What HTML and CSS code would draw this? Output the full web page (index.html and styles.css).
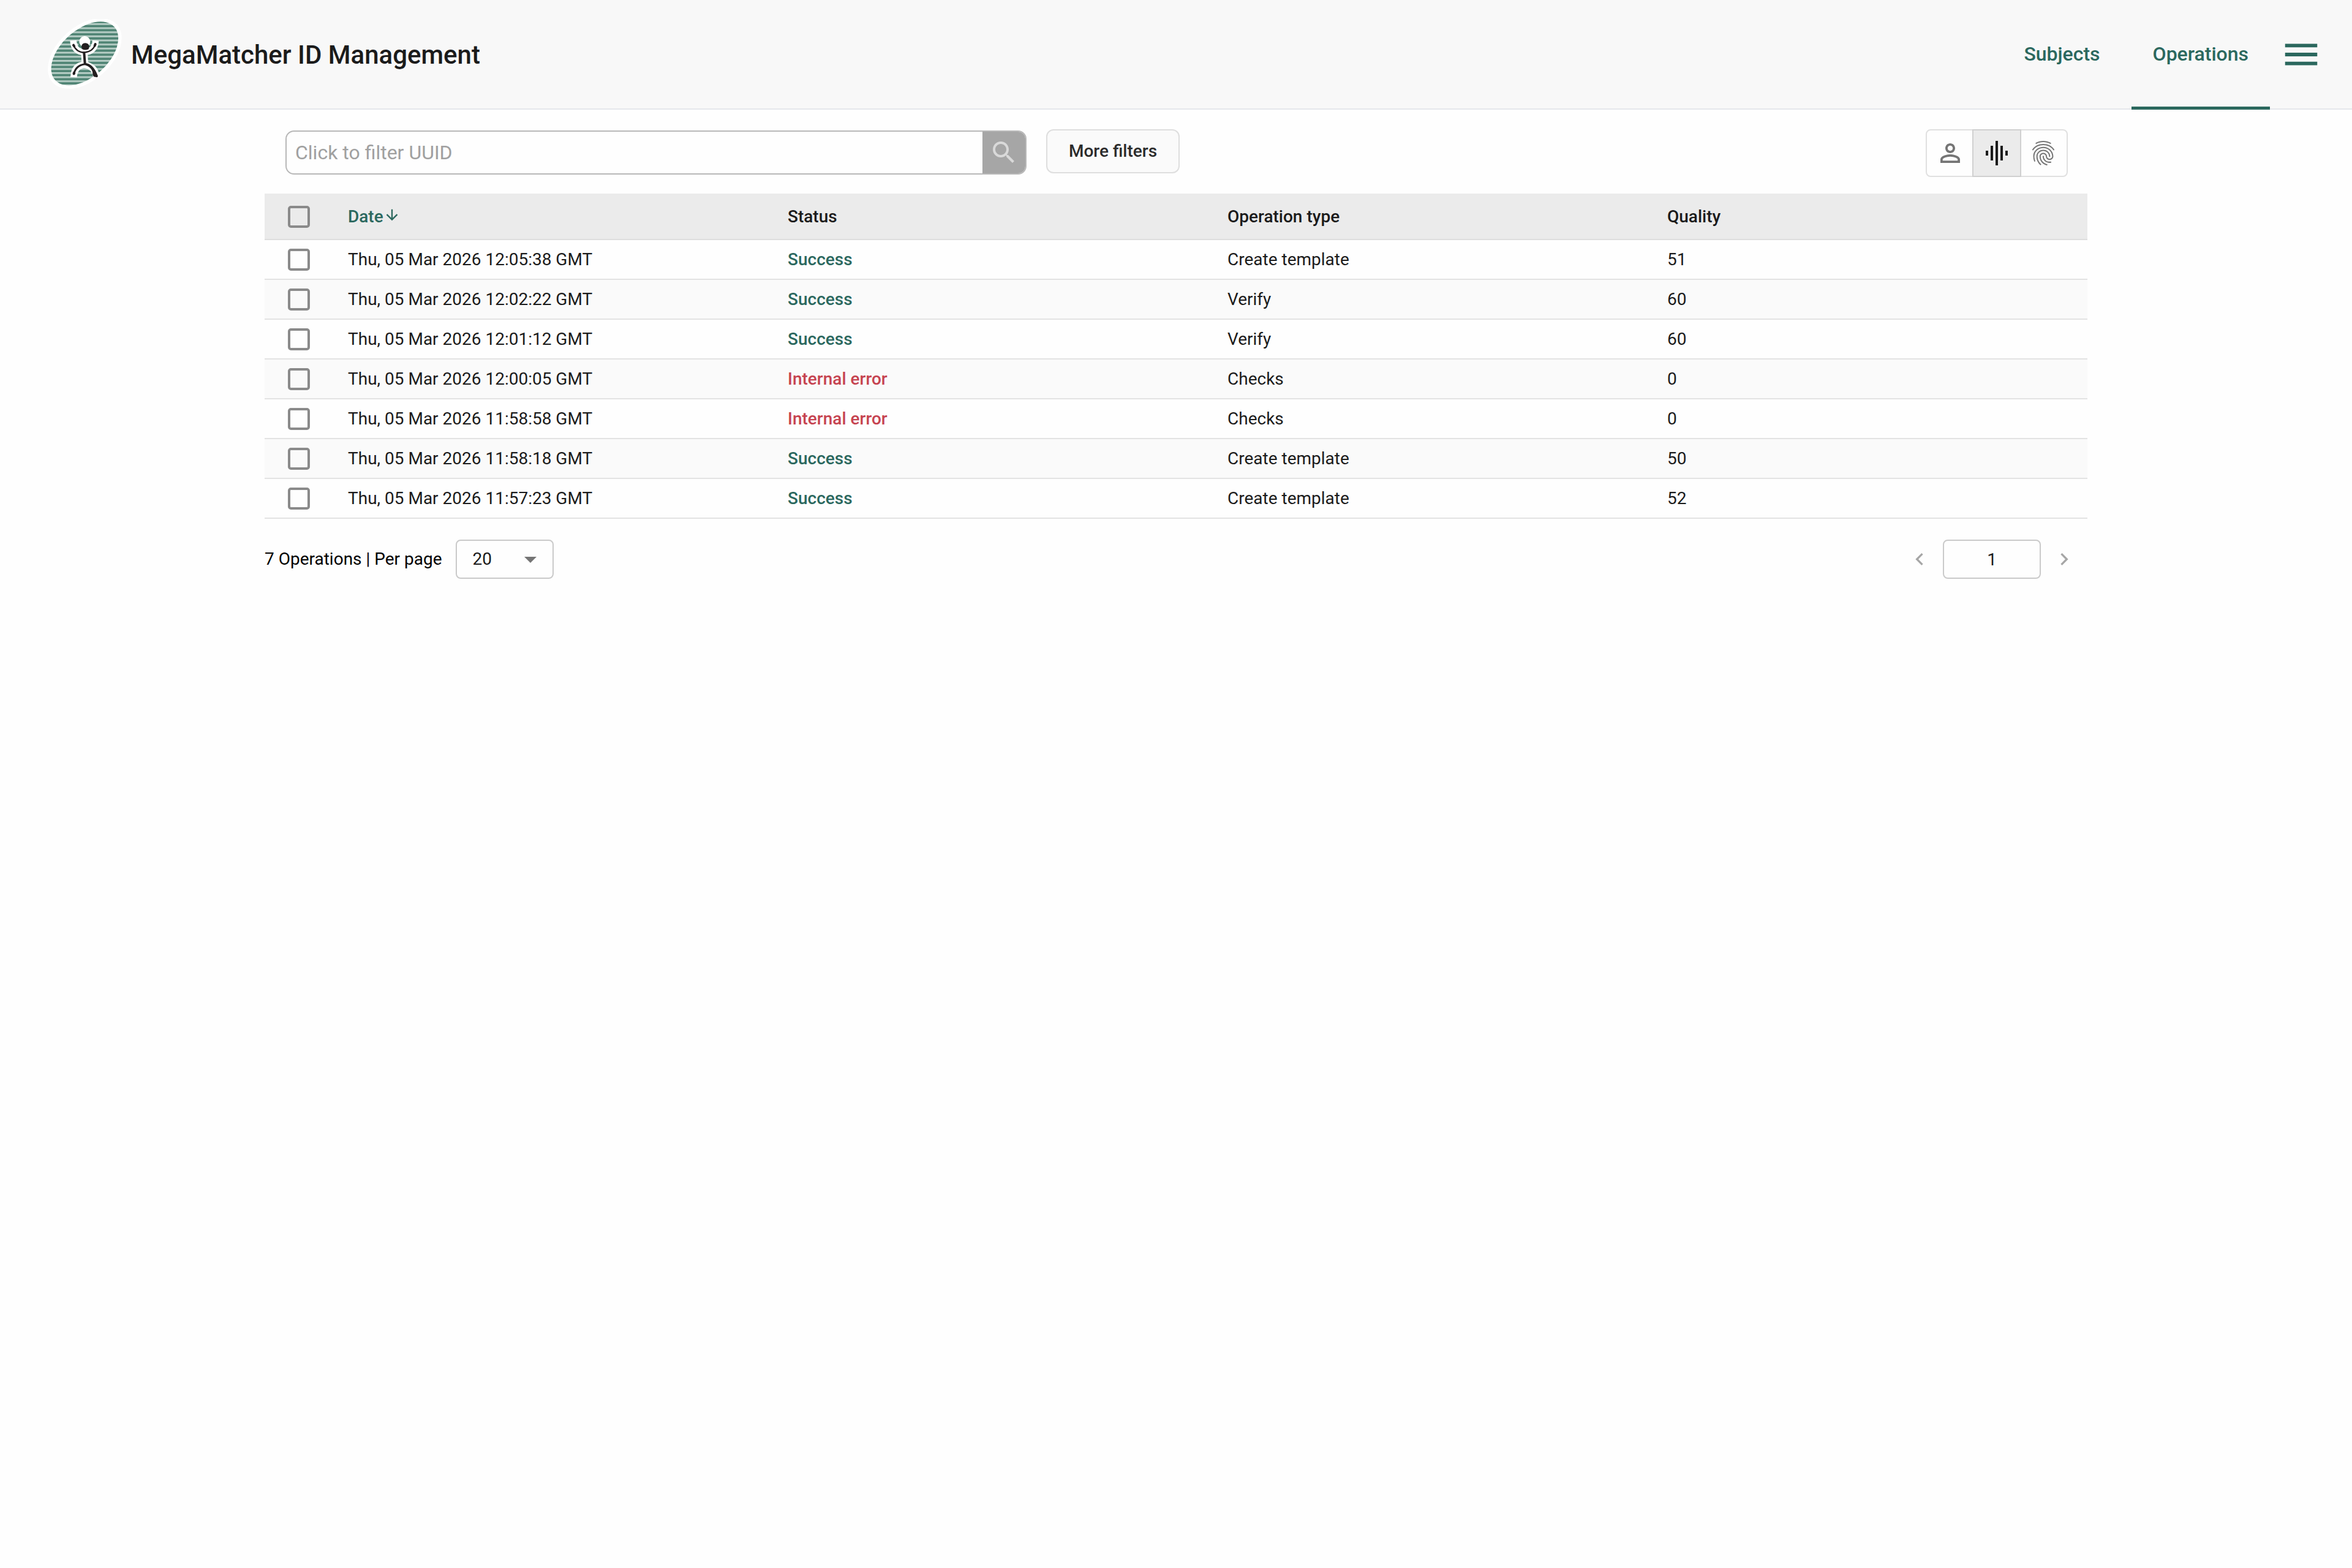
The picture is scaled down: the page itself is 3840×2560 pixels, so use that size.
FILE: index.html
```html
<!DOCTYPE html>
<html lang="en">
<head>
<meta charset="UTF-8">
<meta name="viewport" content="width=device-width, initial-scale=1.0">
<title>MegaMatcher ID Management</title>
<link rel="stylesheet" href="styles.css">
</head>
<body>
<header class="header">
    <svg class="logo" viewBox="54 60 366 345" role="img" aria-label="Logo">
        <defs>
            <pattern id="stripes" x="0" y="87" width="40" height="20" patternUnits="userSpaceOnUse">
                <rect width="40" height="20" fill="#d3e1dc"/>
                <rect width="40" height="12" y="2" fill="#4f8474"/>
                <rect width="40" height="2" y="17" fill="#8fb3a8"/>
            </pattern>
            <clipPath id="oval">
                <ellipse cx="235" cy="229" rx="195" ry="116" transform="rotate(-42 235 229)"/>
            </clipPath>
        </defs>
        <ellipse cx="235" cy="229" rx="212" ry="132" transform="rotate(-42 235 229)" fill="#fff"/>
        <rect x="54" y="60" width="366" height="345" fill="url(#stripes)" clip-path="url(#oval)"/>
        <!-- white halo round the figure -->
        <g fill="none" stroke="#fff" stroke-width="32">
            <path d="M179 166Q182 222 233 222Q284 222 288 166"/>
            <path d="M233 222L236 285"/>
            <path d="M181 345Q184 286 236 284Q284 292 292 340"/>
        </g>
        <path d="M204 168V186Q210 202 222 206V168z" fill="#4f8474"/>
        <path d="M262 166H271V180L262 186z" fill="#4f8474"/>
        <circle cx="235" cy="171" r="27" fill="#fff"/>
        <path d="M219 194Q221 178 240 178Q256 180 257 196L254 208Q237 216 222 207z" fill="#231f20"/>
        <g fill="none" stroke="#231f20" stroke-linecap="round">
            <path d="M180 189Q196 224 233 224Q276 220 287 183" stroke-width="7"/>
            <path d="M180 188L183 193M287 183L284 191" stroke-width="12"/>
            <path d="M232 226L236 278" stroke-width="12"/>
            <path d="M182 328Q192 286 236 281" stroke-width="9"/>
            <path d="M182 328L183 324" stroke-width="13"/>
        </g>
        <path d="M232 276Q276 274 300 340L296 346L280 343L274 334Q276 296 232 284z" fill="#231f20"/>
    </svg>
    <h1 class="title">MegaMatcher ID Management</h1>
    <nav class="nav">
        <a class="tab" href="#subjects">Subjects</a>
        <a class="tab active" href="#operations">Operations</a>
    </nav>
    <button class="menu-button" type="button" aria-label="Menu">
        <svg viewBox="0 0 24 24"><path d="M3 18h18v-2H3v2zm0-5h18v-2H3v2zm0-7v2h18V6H3z"/></svg>
    </button>
</header>

<main class="content">
    <div class="toolbar">
        <form class="search">
            <input class="search-input" type="text" placeholder="Click to filter UUID" aria-label="Click to filter UUID">
            <button class="search-button" type="button" aria-label="Search">
                <svg viewBox="0 0 24 24"><path d="M15.5 14h-.79l-.28-.27C15.41 12.59 16 11.11 16 9.5 16 5.91 13.09 3 9.5 3S3 5.91 3 9.5 5.91 16 9.5 16c1.61 0 3.09-.59 4.23-1.57l.27.28v.79l5 4.99L20.49 19l-4.99-5zm-6 0C7.01 14 5 11.99 5 9.5S7.01 5 9.5 5 14 7.01 14 9.5 11.99 14 9.5 14z"/></svg>
            </button>
        </form>
        <button class="filters-button" type="button">More filters</button>
        <div class="toggle-group">
            <button class="toggle" type="button" aria-label="Face">
                <svg viewBox="0 0 24 24"><path d="M12 5.9c1.16 0 2.1.94 2.1 2.1s-.94 2.1-2.1 2.1S9.900 9.160 9.900 8s.94-2.100 2.100-2.100m0 9c2.970 0 6.100 1.460 6.100 2.100v1.100H5.900V17c0-.64 3.130-2.100 6.100-2.100M12 4C9.790 4 8 5.790 8 8s1.790 4 4 4 4-1.790 4-4-1.790-4-4-4zm0 9c-2.670 0-8 1.340-8 4v3h16v-3c0-2.660-5.330-4-8-4z"/></svg>
            </button>
            <button class="toggle selected" type="button" aria-label="Voice" aria-pressed="true">
                <svg viewBox="0 0 24 24"><path d="M7 18h2V6H7v12zm4 4h2V2h-2v20zm-8-8h2v-4H3v4zm12 4h2V6h-2v12zm4-8v4h2v-4h-2z"/></svg>
            </button>
            <button class="toggle" type="button" aria-label="Finger">
                <svg viewBox="0 0 24 24"><path d="M17.810 4.470c-.08 0-.16-.02-.23-.06C15.660 3.420 14 3 12.010 3c-1.980 0-3.860.47-5.570 1.410-.24.130-.54.04-.68-.2-.13-.24-.04-.55.2-.68C7.820 2.520 9.860 2 12.010 2c2.130 0 3.990.47 6.030 1.520.25.130.34.430.21.670-.09.180-.26.280-.44.280zM3.500 9.720c-.1 0-.2-.03-.29-.09-.23-.16-.28-.47-.12-.7.990-1.400 2.250-2.500 3.750-3.270C9.980 4.040 14 4.030 17.150 5.650c1.500.77 2.760 1.860 3.750 3.250.16.220.11.540-.12.700-.23.160-.54.110-.7-.12-.9-1.260-2.040-2.250-3.390-2.940-2.870-1.470-6.540-1.470-9.400.01-1.360.7-2.500 1.700-3.400 2.960-.08.140-.23.210-.39.210zm6.250 12.070c-.13 0-.26-.05-.35-.15-.87-.87-1.340-1.430-2.010-2.640-.69-1.230-1.050-2.730-1.050-4.340 0-2.970 2.540-5.390 5.660-5.390s5.660 2.420 5.660 5.390c0 .28-.22.500-.5.500s-.5-.22-.5-.5c0-2.420-2.090-4.390-4.660-4.390-2.570 0-4.660 1.970-4.660 4.390 0 1.440.32 2.770.93 3.850.64 1.150 1.080 1.640 1.850 2.420.19.200.19.510 0 .71-.11.100-.24.150-.37.150zm7.170-1.850c-1.190 0-2.240-.3-3.100-.89-1.490-1.010-2.380-2.650-2.380-4.390 0-.28.220-.5.500-.5s.5.220.5.500c0 1.410.72 2.740 1.940 3.560.71.480 1.540.71 2.540.71.240 0 .64-.03 1.040-.1.270-.05.530.130.580.410.05.270-.13.530-.41.580-.57.110-1.070.120-1.210.120zM14.910 22c-.04 0-.09-.01-.13-.02-1.590-.44-2.630-1.030-3.720-2.100-1.400-1.390-2.170-3.240-2.170-5.220 0-1.620 1.380-2.940 3.080-2.940 1.700 0 3.080 1.320 3.080 2.940 0 1.070.93 1.940 2.080 1.940s2.080-.87 2.080-1.940c0-3.770-3.250-6.830-7.250-6.830-2.840 0-5.440 1.580-6.610 4.030-.39.810-.59 1.760-.59 2.800 0 .78.070 2.010.67 3.610.1.260-.03.550-.29.640-.26.100-.55-.04-.64-.29-.49-1.310-.73-2.610-.73-3.960 0-1.200.23-2.290.68-3.240 1.330-2.790 4.280-4.600 7.510-4.600 4.550 0 8.250 3.510 8.250 7.830 0 1.620-1.380 2.940-3.080 2.940s-3.080-1.320-3.080-2.940c0-1.070-.93-1.940-2.080-1.940s-2.080.87-2.080 1.940c0 1.710.66 3.310 1.870 4.510.95.940 1.860 1.460 3.270 1.850.27.070.42.350.35.610-.05.230-.26.380-.47.380z"/></svg>
            </button>
        </div>
    </div>

    <table class="operations">
        <thead>
            <tr>
                <th class="check-cell"><input type="checkbox" aria-label="Select all"></th>
                <th class="sorted">Date<svg viewBox="0 0 24 24"><path d="M20 12l-1.410-1.410L13 16.170V4h-2v12.170l-5.580-5.590L4 12l8 8 8-8z"/></svg></th>
                <th>Status</th>
                <th>Operation type</th>
                <th>Quality</th>
            </tr>
        </thead>
        <tbody>
            <tr>
                <td class="check-cell"><input type="checkbox" aria-label="Select operation 1"></td>
                <td>Thu, 05 Mar 2026 12:05:38 GMT</td>
                <td class="success">Success</td>
                <td>Create template</td>
                <td>51</td>
            </tr>
            <tr>
                <td class="check-cell"><input type="checkbox" aria-label="Select operation 2"></td>
                <td>Thu, 05 Mar 2026 12:02:22 GMT</td>
                <td class="success">Success</td>
                <td>Verify</td>
                <td>60</td>
            </tr>
            <tr>
                <td class="check-cell"><input type="checkbox" aria-label="Select operation 3"></td>
                <td>Thu, 05 Mar 2026 12:01:12 GMT</td>
                <td class="success">Success</td>
                <td>Verify</td>
                <td>60</td>
            </tr>
            <tr>
                <td class="check-cell"><input type="checkbox" aria-label="Select operation 4"></td>
                <td>Thu, 05 Mar 2026 12:00:05 GMT</td>
                <td class="error">Internal error</td>
                <td>Checks</td>
                <td>0</td>
            </tr>
            <tr>
                <td class="check-cell"><input type="checkbox" aria-label="Select operation 5"></td>
                <td>Thu, 05 Mar 2026 11:58:58 GMT</td>
                <td class="error">Internal error</td>
                <td>Checks</td>
                <td>0</td>
            </tr>
            <tr>
                <td class="check-cell"><input type="checkbox" aria-label="Select operation 6"></td>
                <td>Thu, 05 Mar 2026 11:58:18 GMT</td>
                <td class="success">Success</td>
                <td>Create template</td>
                <td>50</td>
            </tr>
            <tr>
                <td class="check-cell"><input type="checkbox" aria-label="Select operation 7"></td>
                <td>Thu, 05 Mar 2026 11:57:23 GMT</td>
                <td class="success">Success</td>
                <td>Create template</td>
                <td>52</td>
            </tr>
        </tbody>
    </table>

    <div class="table-footer">
        <label for="per-page">7 Operations | Per page</label>
        <div class="select-wrap">
            <select class="field" id="per-page">
                <option>20</option>
                <option>50</option>
                <option>100</option>
            </select>
            <svg class="select-arrow" viewBox="0 0 24 24"><path d="M7 10l5 5 5-5z"/></svg>
        </div>
        <div class="pager">
            <button class="page-button" type="button" aria-label="Previous page" disabled>
                <svg viewBox="0 0 24 24"><path d="M15.410 7.410L14 6l-6 6 6 6 1.410-1.410L10.830 12z"/></svg>
            </button>
            <input class="field page-input" type="text" value="1" aria-label="Page">
            <button class="page-button" type="button" aria-label="Next page" disabled>
                <svg viewBox="0 0 24 24"><path d="M10 6L8.590 7.410 13.170 12l-4.580 4.590L10 18l6-6z"/></svg>
            </button>
        </div>
    </div>
</main>
</body>
</html>
```
FILE: styles.css
```css
* {
    box-sizing: border-box;
}

body {
    margin: 0;
    background-color: #fefefe;
    color: #1b1b1b;
    font-family: Roboto, Arial, sans-serif;
    font-size: 28px;
    line-height: 40px;
}

button, input, select {
    margin: 0;
    padding: 0;
    border: 0;
    background: none;
    color: inherit;
    font: inherit;
}

svg {
    display: block;
    fill: currentColor;
}

/* Header */
.header {
    display: flex;
    align-items: center;
    height: 179px;
    padding: 0 48px 0 78px;
    background-color: #f8f8f8;
    border-bottom: 2px solid #e5e7eb;
}

.logo {
    width: 122px;
    height: 115px;
    flex: none;
}

.title {
    margin: 0 auto 0 14px;
    padding-top: 2px;
    font-size: 42px;
    font-weight: 500;
    line-height: 56px;
}

.nav {
    display: flex;
    align-self: stretch;
    gap: 16px;
    margin-bottom: -2px;
    margin-right: 16px;
}

.tab {
    display: flex;
    align-items: center;
    padding: 2px 35px 0;
    border-bottom: 5px solid transparent;
    color: #2b685e;
    font-size: 32px;
    font-weight: 500;
    text-decoration: none;
}

.tab.active {
    border-bottom-color: #2b685e;
}

.menu-button {
    color: #2b685e;
}

.menu-button svg {
    width: 70px;
    height: 70px;
}

/* Toolbar */
.content {
    width: 77.5%;
    margin: 0 auto;
}

.toolbar {
    display: flex;
    align-items: flex-start;
    gap: 32px;
    padding: 32px 32px 27px 34px;
}

.search {
    display: flex;
    flex: 0 1 1210px;
    height: 72px;
    margin-top: 2px;
    border: 2px solid #b8b8b8;
    border-radius: 14px;
    overflow: hidden;
}

.search-input {
    flex: 1;
    min-width: 0;
    padding: 0 14px;
    font-size: 32px;
}

.search-input::placeholder {
    color: #a0a0a0;
    opacity: 1;
}

.search-button {
    display: flex;
    align-items: center;
    justify-content: center;
    width: 70px;
    background-color: #a6a6a6;
    color: #d9d9d9;
}

.search-button svg, .toggle svg {
    width: 48px;
    height: 48px;
}

.filters-button {
    height: 72px;
    padding: 0 32px;
    min-width: 218px;
    background-color: #fafafa;
    border: 2px solid #dedede;
    border-radius: 12px;
    color: #2b2b2b;
    font-weight: 500;
}

.toggle-group {
    display: flex;
    margin-left: auto;
    border: 2px solid #e0e0e0;
    border-radius: 8px;
}

.toggle {
    display: flex;
    align-items: center;
    justify-content: center;
    width: 76px;
    height: 74px;
    color: #757575;
}

.toggle.selected {
    background-color: #ebebeb;
    box-shadow: 0 0 0 2px #d0d0d0;
    color: #1b1b1b;
}

/* Operations table */
.operations {
    width: 100%;
    table-layout: fixed;
    border-collapse: separate;
    border-spacing: 0;
}

.operations th, .operations td {
    height: 65px;
    padding: 0 32px;
    border-bottom: 2px solid #e3e3e3;
    text-align: left;
    font-weight: 400;
}

.operations th {
    height: 76px;
    padding-top: 2px;
    background-color: #ebebeb;
    border-bottom-color: #dedede;
    font-weight: 500;
}

.operations tbody tr:nth-child(even) {
    background-color: #fafafa;
}

.operations .check-cell {
    width: 104px;
    padding-left: 38px;
    padding-right: 0;
}

.operations .sorted {
    color: #2b685e;
}

.sorted svg {
    display: inline-block;
    width: 28px;
    height: 28px;
    vertical-align: -2px;
}

.operations .success {
    color: #2b685e;
    font-weight: 500;
}

.operations .error {
    color: #c64350;
    font-weight: 500;
}

input[type="checkbox"] {
    display: block;
    appearance: none;
    width: 36px;
    height: 36px;
    border: 4px solid #8a8a8a;
    border-radius: 5px;
}

/* Footer */
.table-footer {
    display: flex;
    align-items: center;
    gap: 22px;
    padding-top: 34px;
    color: #000;
}

.field {
    width: 160px;
    height: 64px;
    border: 2px solid #cacaca;
    border-radius: 8px;
    color: #1b1b1b;
}

.select-wrap {
    position: relative;
}

select.field {
    display: block;
    appearance: none;
    padding-left: 26px;
}

/* arrow lies over the select */
.select-arrow {
    position: absolute;
    top: 8px;
    right: 14px;
    width: 48px;
    height: 48px;
    color: #757575;
    pointer-events: none;
}

.pager {
    display: flex;
    align-items: center;
    gap: 18px;
    margin-left: auto;
    padding-right: 18px;
}

.page-button {
    color: #a6a6a6;
}

.page-button svg {
    width: 40px;
    height: 40px;
}

.page-input {
    text-align: center;
}
```
